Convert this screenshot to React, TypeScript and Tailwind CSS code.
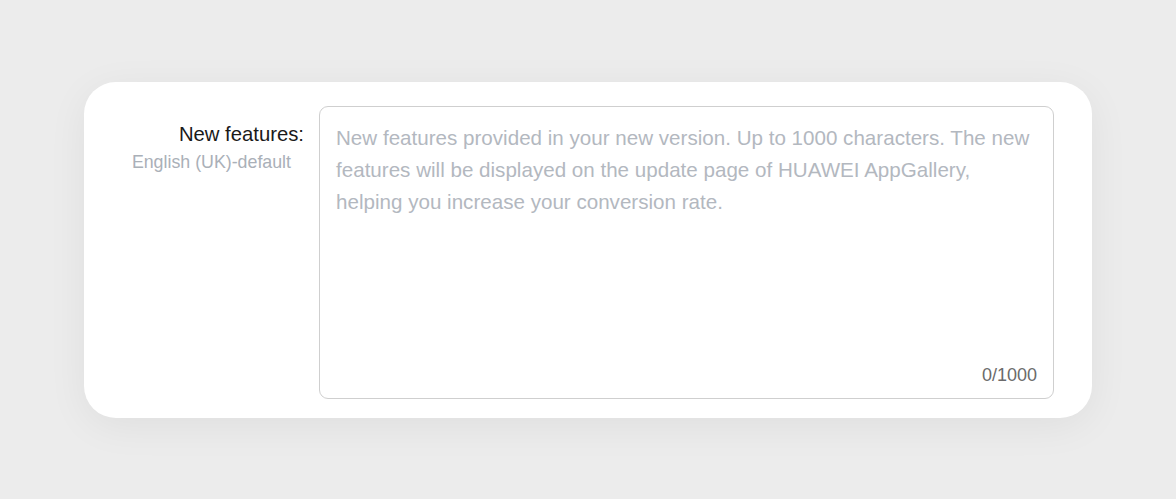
import React from "react";

export default function App() {
  return (
    <div className="flex h-[499px] w-full items-center justify-center bg-[#ececec] font-['Liberation_Sans',Arial,sans-serif]">
      <div className="flex h-[336px] w-[1008px] rounded-[32px] bg-white pt-6 pb-[19px] pr-[38px] shadow-[0_8px_40px_rgba(0,0,0,0.06)]">
        <div className="flex w-[220px] shrink-0 flex-col items-end pt-[16px]">
          <span className="text-[20.3px] leading-[24px] text-[#1a1a1a]">New features:</span>
          <span className="mt-[5px] pr-[13px] text-[17.8px] leading-[22px] text-[#aab0b8]">English (UK)-default</span>
        </div>
        <div className="ml-[15px] flex flex-1 flex-col rounded-[9px] border border-[#cfcfcf] pt-[15px] pr-3 pb-[11px] pl-4">
          <p className="flex-1 text-[20.6px] leading-[32px] text-[#b3b8bf]">
            New features provided in your new version. Up to 1000 characters. The new features will be displayed on the update page of HUAWEI AppGallery, helping you increase your conversion rate.
          </p>
          <div className="pr-1 text-right text-[18px] leading-[24px] text-[#6b6b6b]">0/1000</div>
        </div>
      </div>
    </div>
  );
}
